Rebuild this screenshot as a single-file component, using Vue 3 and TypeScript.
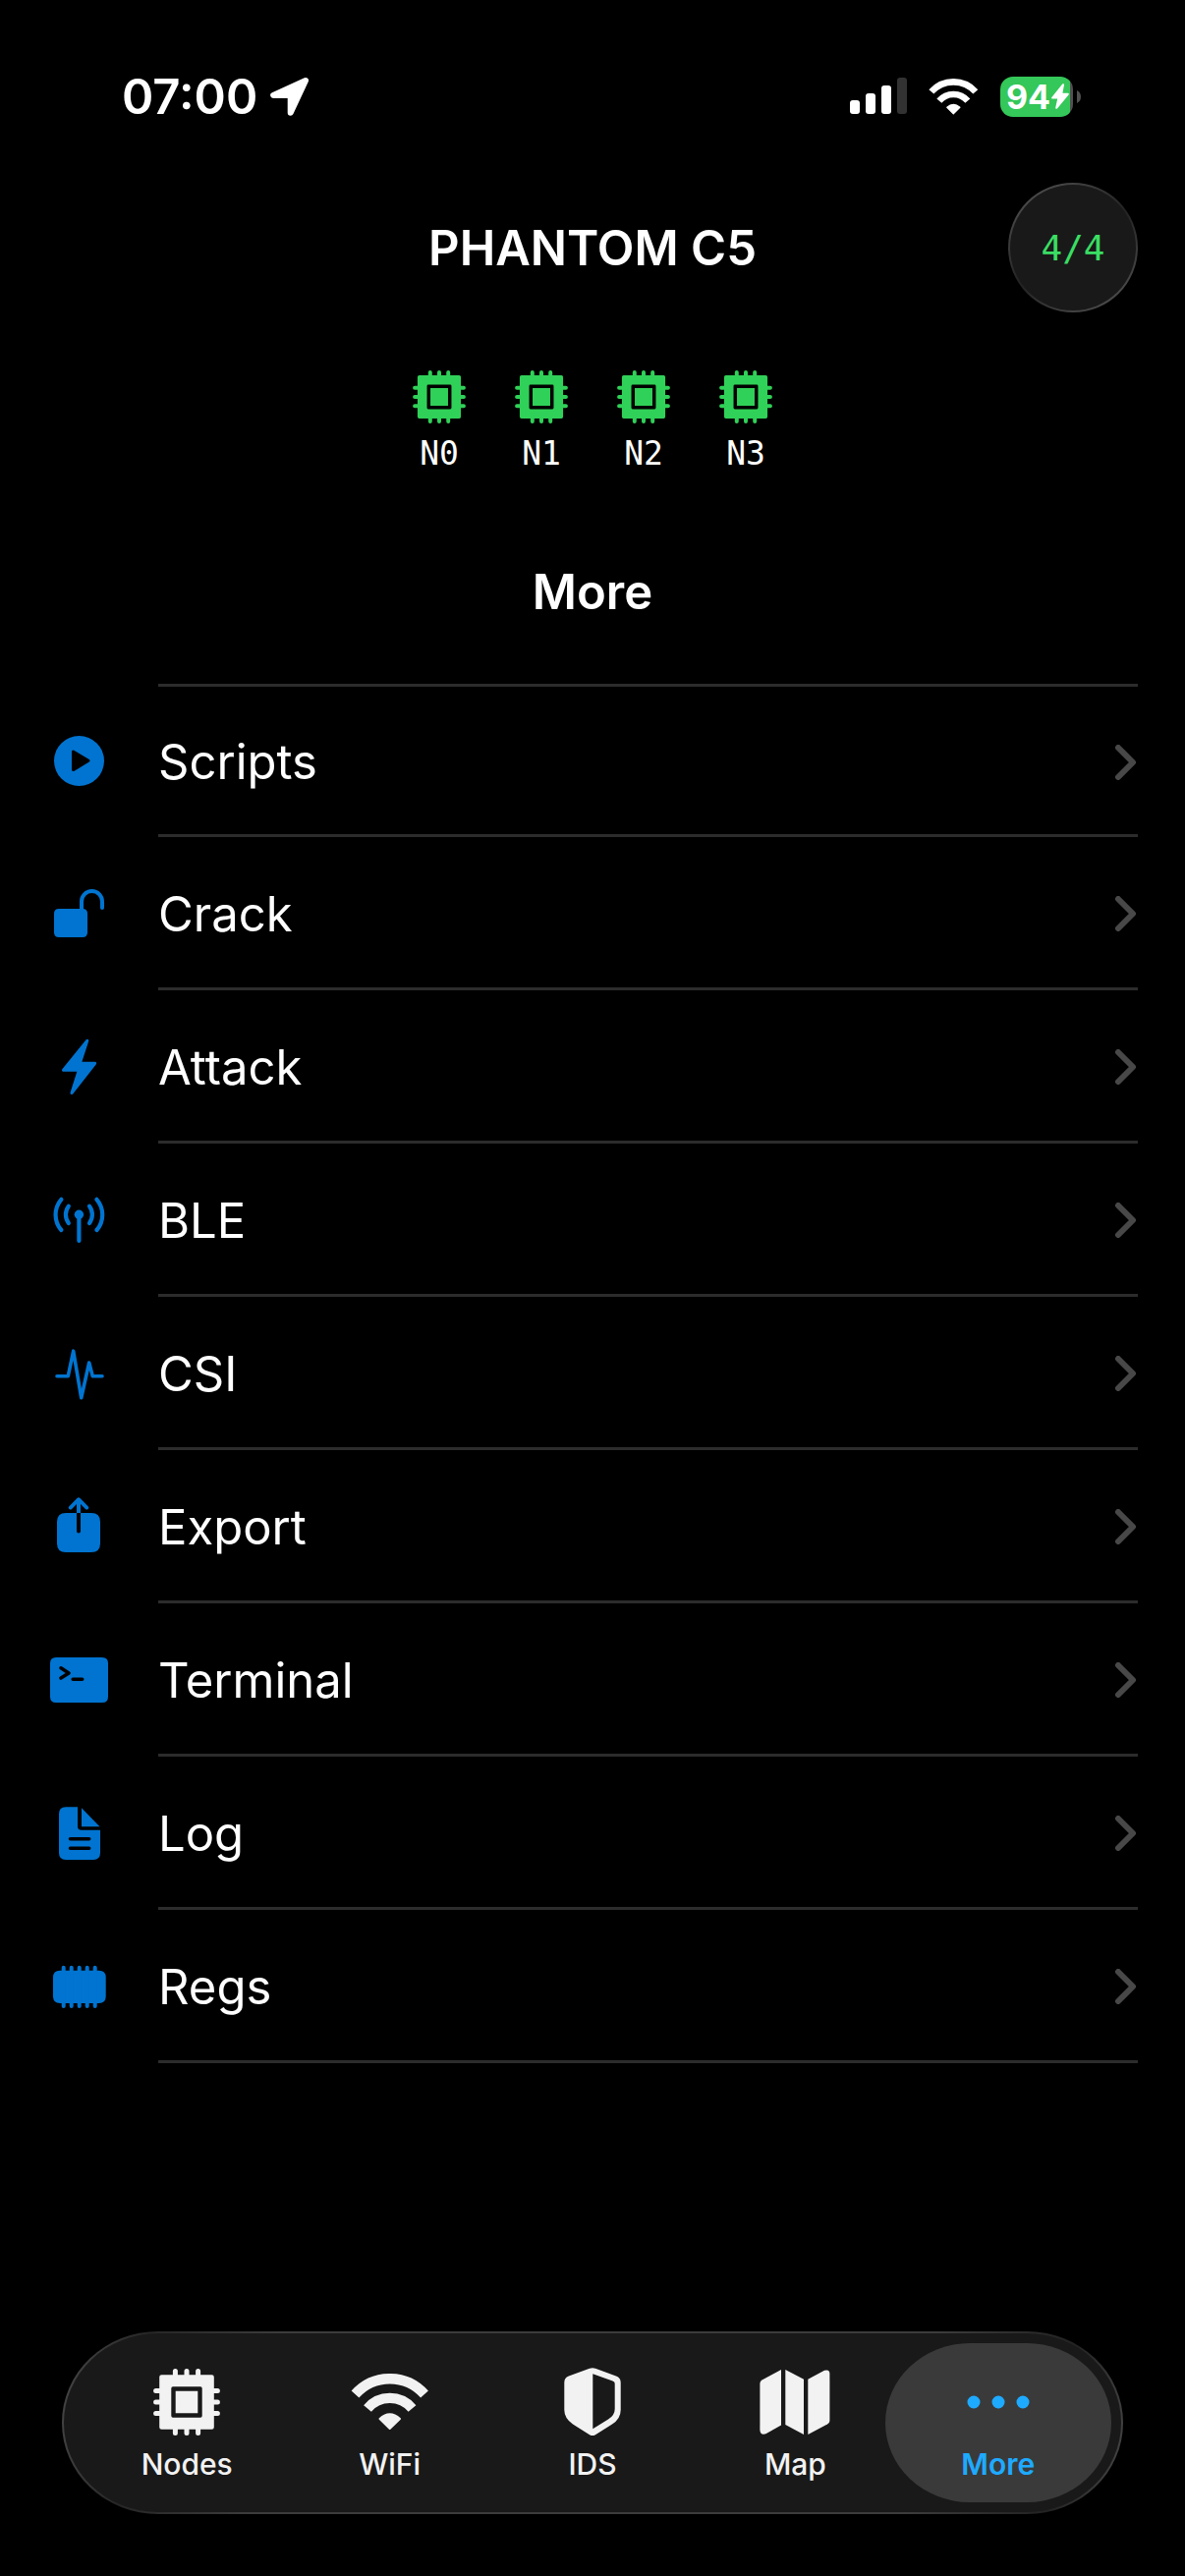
<script setup lang="ts">
interface Shape {
  d: string
  /** Stroke width; a shape without one is filled only. */
  stroke?: number
  /** Fills the shape as well as stroking it. */
  solid?: boolean
  /** Draws in the background colour, for marks cut out of a solid. */
  cut?: boolean
  /** Square stroke ends. */
  butt?: boolean
}

interface Glyph {
  w: number
  h: number
  shapes: Shape[]
}

const wifi: Glyph = {
  w: 80,
  h: 58,
  shapes: [
    { d: 'M4.5 21A47.2 47.2 0 0 1 75 21', stroke: 10.4, butt: true },
    { d: 'M17 35.5A29.8 29.8 0 0 1 62.5 35.5', stroke: 10.2, butt: true },
    { d: 'M29.5 46Q39.7 36.5 50 46L39.7 56Z', stroke: 2, solid: true },
  ],
}

const chip: Glyph = {
  w: 68,
  h: 68,
  shapes: [
    {
      d: 'M8.5 6.2H59.5Q61.8 6.2 61.8 8.5V59.5Q61.8 61.8 59.5 61.8H8.5Q6.2 61.8 6.2 59.5V8.5Q6.2 6.2 8.5 6.2ZM20 18.3Q18.3 18.3 18.3 20V48Q18.3 49.7 20 49.7H48Q49.7 49.7 49.7 48V20Q49.7 18.3 48 18.3ZM22.7 22.7H45.3V45.3H22.7Z',
    },
    {
      d: 'M22.4 2.6V8M34 2.6V8M45.6 2.6V8M22.4 60V65.4M34 60V65.4M45.6 60V65.4M2.6 22.4H8M2.6 34H8M2.6 45.6H8M60 22.4H65.4M60 34H65.4M60 45.6H65.4',
      stroke: 5,
    },
  ],
}

const shield: Glyph = {
  w: 60,
  h: 72,
  shapes: [
    {
      d: 'M27 1.8Q30 .6 33 1.8L54 9.5Q58.7 11.3 58.7 16V44Q58.7 53 50 58.5L33 69.2Q30 71 27 69.2L10 58.5Q1.3 52.5 1.3 44V16Q1.3 11.3 5.8 9.5ZM30.3 7.3V63.3L46 53.5Q52.7 49.5 52.7 43V17Q52.7 15.3 50.5 14.5Z',
    },
  ],
}

const map: Glyph = {
  w: 72,
  h: 68,
  shapes: [
    { d: 'M.4 15Q.4 12.6 2.5 11.4L22 1V57.5L6.5 66.3Q.4 68 .4 62Z' },
    { d: 'M26.3 1L45 10.8V67L26.3 57Z' },
    { d: 'M49.3 10.8L66 1.8Q71.4 .2 71.4 5V53Q71.4 55.3 69 56.6L49.3 67Z' },
  ],
}

const dots: Glyph = {
  w: 68,
  h: 16,
  shapes: [{ d: 'M9 8h.01M34 8h.01M59 8h.01', stroke: 13 }],
}

const arrow: Glyph = {
  w: 41,
  h: 41,
  shapes: [{ d: 'M37 4L4.2 19H21.7V36.8Z', stroke: 6, solid: true }],
}

const row = (shapes: Shape[]): Glyph => ({ w: 61, h: 61, shapes })

const entries: { label: string; glyph: Glyph }[] = [
  {
    label: 'Scripts',
    glyph: row([
      { d: 'M30.5 5a25.5 25.5 0 1 0 0 51a25.5 25.5 0 1 0 0-51Z' },
      { d: 'M24.5 21V39.6L40 30.3Z', stroke: 3, solid: true, cut: true },
    ]),
  },
  {
    label: 'Crack',
    glyph: row([
      { d: 'M10 27H34Q39 27 39 32V51Q39 56 34 56H10Q5 56 5 51V32Q5 27 10 27Z' },
      { d: 'M33 30V19.5A10.5 10.5 0 0 1 54 19.5V26', stroke: 4 },
    ]),
  },
  {
    label: 'Attack',
    glyph: row([
      { d: 'M38.8 5.3L14.5 35.3H30.4L23 58.5L46.7 28.3H31.3Z', stroke: 3, solid: true },
    ]),
  },
  {
    label: 'BLE',
    glyph: row([
      { d: 'M30.4 26.3h.01', stroke: 9.4 },
      { d: 'M30.4 26.3V53', stroke: 4.2 },
      { d: 'M12.4 10.8A23.8 23.8 0 0 0 12.4 42M48.4 10.8A23.8 23.8 0 0 1 48.4 42', stroke: 4.2 },
      { d: 'M19.8 17.7A14.4 14.4 0 0 0 19.8 35M41 17.7A14.4 14.4 0 0 1 41 35', stroke: 4.2 },
    ]),
  },
  {
    label: 'CSI',
    glyph: row([
      { d: 'M8 34.7H19.3L24.7 9.2L32.7 56.8L40.7 21L44.3 34.7H54', stroke: 3.6 },
    ]),
  },
  {
    label: 'Export',
    glyph: row([
      { d: 'M17 18H43Q52 18 52 27V49Q52 58 43 58H17Q8 58 8 49V27Q8 18 17 18Z' },
      { d: 'M30 18V36.4', stroke: 4, cut: true },
      { d: 'M28 5H32V18H28Z' },
      { d: 'M21.7 12.6L30 4.2L38.3 12.6', stroke: 3.8 },
    ]),
  },
  {
    label: 'Terminal',
    glyph: row([
      { d: 'M7 9H54Q60 9 60 15V49Q60 55 54 55H7Q1 55 1 49V15Q1 9 7 9Z' },
      { d: 'M12 19.8L20 25L12 30M24.2 31.3H33.7', stroke: 3.6, cut: true },
    ]),
  },
  {
    label: 'Log',
    glyph: row([
      { d: 'M17 5.3H29V25Q29 28.8 32.8 28.8H52V52Q52 59 45 59H17Q10 59 10 52V12.3Q10 5.3 17 5.3Z' },
      { d: 'M33 6.3V25.3H51.5Z' },
      { d: 'M21.5 37.7H40.7M21.5 47.3H40.7', stroke: 3.6, cut: true },
    ]),
  },
  {
    label: 'Regs',
    glyph: row([
      { d: 'M11 15.7H50.7Q57.7 15.7 57.7 22.7V42Q57.7 49 50.7 49H11Q4 49 4 42V22.7Q4 15.7 11 15.7Z' },
      { d: 'M14.7 12.7V52M22.7 12.7V52M30.7 12.7V52M38.7 12.7V52M46.7 12.7V52', stroke: 4 },
    ]),
  },
]

const tabs: { label: string; glyph: Glyph; active?: boolean }[] = [
  { label: 'Nodes', glyph: chip },
  { label: 'WiFi', glyph: wifi },
  { label: 'IDS', glyph: shield },
  { label: 'Map', glyph: map },
  { label: 'More', glyph: dots, active: true },
]

const nodes = ['N0', 'N1', 'N2', 'N3']

const paint = (s: Shape) => {
  const color = s.cut ? '#000' : 'currentColor'
  return {
    d: s.d,
    fill: s.stroke && !s.solid ? 'none' : color,
    'fill-rule': 'evenodd' as const,
    stroke: s.stroke ? color : 'none',
    'stroke-width': s.stroke,
    'stroke-linecap': s.butt ? ('butt' as const) : ('round' as const),
    'stroke-linejoin': 'round' as const,
  }
}
</script>

<template>
  <div class="screen">
    <div class="status">
      <div class="clock">
        <time>07:00</time>
        <svg class="location" viewBox="0 0 41 41" aria-hidden="true">
          <path v-for="(s, i) in arrow.shapes" :key="i" v-bind="paint(s)" />
        </svg>
      </div>
      <div class="indicators">
        <svg class="signal" viewBox="0 0 58 38" aria-hidden="true">
          <rect x="0" y="23" width="10" height="14" rx="3" />
          <rect x="16" y="16" width="10" height="21" rx="3" />
          <rect x="32" y="8" width="10" height="29" rx="3" />
          <rect x="48" y="0" width="10" height="37" rx="3" fill="#323232" />
        </svg>
        <svg class="wifi" viewBox="0 0 80 58" aria-hidden="true">
          <path v-for="(s, i) in wifi.shapes" :key="i" v-bind="paint(s)" />
        </svg>
        <div class="battery">
          <div class="cell">
            <span>94</span>
            <svg class="bolt" viewBox="0 0 18 26" aria-hidden="true">
              <path
                d="M12 1.2L1.2 14.6H7.4L5.2 24.8L16.8 10.8H10.2Z"
                stroke="#fff"
                stroke-width="2"
                stroke-linejoin="round"
              />
            </svg>
          </div>
          <svg class="nub" viewBox="0 0 4 13" aria-hidden="true">
            <path d="M0 0Q4 2 4 6.5Q4 11 0 13Z" fill="#505050" />
          </svg>
        </div>
      </div>
    </div>

    <header class="header">
      <h1>PHANTOM C5</h1>
      <button class="count" type="button">4/4</button>
    </header>

    <ul class="nodes">
      <li v-for="n in nodes" :key="n">
        <svg class="node-chip" viewBox="0 0 68 68" aria-hidden="true">
          <path v-for="(s, i) in chip.shapes" :key="i" v-bind="paint(s)" />
        </svg>
        <span>{{ n }}</span>
      </li>
    </ul>

    <main class="content">
      <h2>More</h2>
      <ul class="menu">
        <li v-for="e in entries" :key="e.label">
          <a href="#">
            <span class="lead">
              <svg class="row-icon" viewBox="0 0 61 61" aria-hidden="true">
                <path v-for="(s, i) in e.glyph.shapes" :key="i" v-bind="paint(s)" />
              </svg>
            </span>
            <span class="body">
              <span>{{ e.label }}</span>
              <svg class="chevron" viewBox="0 0 24 36" aria-hidden="true">
                <path d="M4 3L19 18L4 33" />
              </svg>
            </span>
          </a>
        </li>
      </ul>
    </main>

    <nav class="tabs">
      <button
        v-for="t in tabs"
        :key="t.label"
        type="button"
        :class="{ active: t.active }"
        :aria-current="t.active ? 'page' : undefined"
      >
        <span class="tab-icon">
          <svg
            :width="t.glyph.w"
            :height="t.glyph.h"
            :viewBox="`0 0 ${t.glyph.w} ${t.glyph.h}`"
            aria-hidden="true"
          >
            <path v-for="(s, i) in t.glyph.shapes" :key="i" v-bind="paint(s)" />
          </svg>
        </span>
        <span>{{ t.label }}</span>
      </button>
    </nav>
  </div>
</template>

<style>
body {
  margin: 0;
  background: #000;
}
</style>

<style scoped>
.screen {
  box-sizing: border-box;
  display: flex;
  flex-direction: column;
  min-height: 100vh;
  padding-bottom: 63px;
  background: #000;
  color: #fff;
  font-family: Inter, "Liberation Sans", sans-serif;
  font-size: 49px;
}

svg {
  display: block;
  flex: none;
}

ul {
  margin: 0;
  padding: 0;
  list-style: none;
}

button {
  margin: 0;
  padding: 0;
  border: 0;
  background: none;
  color: inherit;
  font: inherit;
}

h1,
h2 {
  margin: 0;
  padding-top: 2px;
  font-size: 49px;
  font-weight: 600;
  line-height: 60px;
}

.status {
  box-sizing: border-box;
  display: flex;
  align-items: center;
  justify-content: space-between;
  height: 186px;
  padding: 10px 106px 0 124px;
}

.clock {
  display: flex;
  align-items: center;
  gap: 12px;
  font-weight: 600;
  line-height: 60px;
}

.clock time {
  padding-top: 2px;
}

.location {
  width: 41px;
  height: 41px;
}

.indicators {
  display: flex;
  align-items: center;
  gap: 22px;
}

.signal {
  width: 58px;
  height: 38px;
  fill: #fff;
}

.wifi {
  width: 51px;
  height: 37px;
}

.battery {
  display: flex;
  align-items: center;
  gap: 4px;
}

.cell {
  box-sizing: border-box;
  display: flex;
  align-items: center;
  justify-content: center;
  gap: 1px;
  width: 74px;
  height: 41px;
  padding-left: 2px;
  border-radius: 13px;
  background: linear-gradient(to right, #34c759 71px, #505050 71px);
  font-size: 34px;
  font-weight: 700;
  line-height: 41px;
}

.bolt {
  width: 18px;
  height: 26px;
  fill: #fff;
}

.nub {
  width: 4px;
  height: 13px;
}

.header {
  display: grid;
  grid-template-columns: 1fr auto 1fr;
  align-items: center;
  padding: 0 48px;
}

.header h1 {
  grid-column: 2;
}

.count {
  justify-self: end;
  box-sizing: border-box;
  width: 132px;
  height: 132px;
  border: 2px solid transparent;
  border-radius: 50%;
  background:
    linear-gradient(#191919, #191919) padding-box,
    linear-gradient(145deg, #484848 15%, #222 50%, #484848 85%) border-box;
  color: #3ade63;
  font-family: "DejaVu Sans Mono", monospace;
  font-size: 36px;
}

.nodes {
  display: flex;
  justify-content: center;
  gap: 50px;
  margin-top: 59px;
}

.nodes li {
  display: flex;
  flex-direction: column;
  align-items: center;
  gap: 12px;
  width: 54px;
  font-family: "DejaVu Sans Mono", monospace;
  font-size: 33px;
  line-height: 38px;
}

.node-chip {
  width: 54px;
  height: 54px;
  color: #30d158;
}

.content {
  margin-top: 90px;
}

.content h2 {
  text-align: center;
}

.menu {
  margin-top: 63px;
}

.menu a {
  display: flex;
  height: 156px;
  color: inherit;
  text-decoration: none;
}

.lead,
.body {
  box-sizing: border-box;
  display: flex;
  align-items: center;
  border-bottom: 3px solid transparent;
}

.lead {
  justify-content: center;
  width: 161px;
  color: #0074d0;
}

.body {
  flex: 1;
  justify-content: space-between;
  margin-right: 48px;
  padding-top: 3px;
  border-color: #2c2c2c;
}

.menu li:first-child .lead {
  border-top: 3px solid transparent;
}

.menu li:first-child .body {
  border-top: 3px solid #2c2c2c;
}

.row-icon {
  width: 61px;
  height: 61px;
}

.chevron {
  width: 24px;
  height: 36px;
  fill: none;
  stroke: #484848;
  stroke-width: 6;
  stroke-linecap: round;
  stroke-linejoin: round;
}

.tabs {
  display: grid;
  grid-template-columns: repeat(5, 1fr);
  margin: auto 63px 0;
  padding: 10px 22px;
  border: 2px solid transparent;
  border-radius: 98px / 93px;
  background:
    linear-gradient(#191919, #191919) padding-box,
    linear-gradient(100deg, #484848, #262626 8%, #3c3c3c 20%, #3c3c3c 80%, #222 93%, #484848) border-box;
}

.tabs button {
  display: flex;
  flex-direction: column;
  align-items: center;
  gap: 9px;
  padding: 24px 0 21px;
  color: #f2f2f2;
  font-size: 30px;
  font-weight: 500;
  line-height: 36px;
}

.tabs .active {
  margin: 0 -12px;
  border-radius: 86px / 81px;
  background: #3a3a3a;
  color: #1eaaff;
  font-weight: 600;
}

.tab-icon {
  display: flex;
  align-items: center;
  justify-content: center;
  height: 72px;
}
</style>
